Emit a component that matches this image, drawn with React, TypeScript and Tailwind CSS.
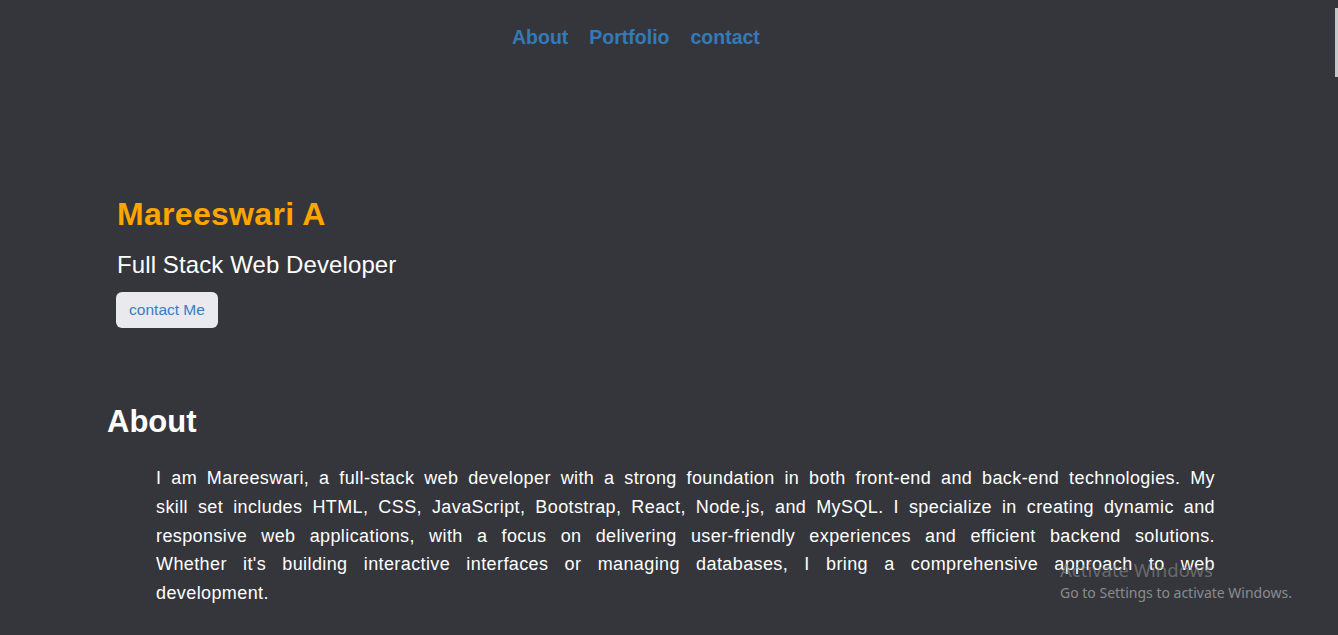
import React from "react";

const lines = [
  "I am Mareeswari, a full-stack web developer with a strong foundation in both front-end and back-end technologies. My",
  "skill set includes HTML, CSS, JavaScript, Bootstrap, React, Node.js, and MySQL. I specialize in creating dynamic and",
  "responsive web applications, with a focus on delivering user-friendly experiences and efficient backend solutions.",
  "Whether it's building interactive interfaces or managing databases, I bring a comprehensive approach to web",
];

export default function App() {
  return (
    <div
      className="relative min-h-screen w-full bg-[#35363b] overflow-hidden"
      style={{ fontFamily: '"Liberation Sans", Arial, sans-serif' }}
    >
      <nav className="flex gap-[21px] pl-[512px] pt-[25px]">
        <a className="text-[19.5px] leading-[24px] font-bold text-[#337ab7]">About</a>
        <a className="text-[19.5px] leading-[24px] font-bold text-[#337ab7]">Portfolio</a>
        <a className="text-[19.5px] leading-[24px] font-bold text-[#337ab7]">contact</a>
      </nav>

      <section className="pl-[117px] pt-[146px] flex flex-col items-start">
        <h1 className="text-[32px] leading-[38px] font-bold tracking-[0.3px] text-[#ffa500]">Mareeswari A</h1>
        <h3 className="mt-[18px] text-[24px] leading-[28px] tracking-[0.1px] text-white">Full Stack Web Developer</h3>
        <button className="mt-[13px] ml-[-1px] h-[36px] w-[102px] rounded-[6px] bg-[#e9e9ee] text-[15.5px] text-[#3a7dc2]">
          contact Me
        </button>
      </section>

      <section className="pl-[107px] pt-[76px]">
        <h2 className="text-[31px] leading-[36px] font-bold text-white">About</h2>
        <div className="mt-[24px] ml-[49px] w-[1059px] text-[18px] leading-[28.8px] tracking-[0.4px] text-white">
          {lines.map((l, i) => (
            <p key={i} className="text-justify [text-align-last:justify]">
              {l}
            </p>
          ))}
          <p>development.</p>
        </div>
      </section>

      <div
        className="pointer-events-none absolute left-[1060px] top-[557px] text-[#8a8b8f]"
        style={{ fontFamily: '"Noto Sans", "Open Sans", sans-serif' }}
      >
        <div className="text-[18.5px] leading-[26px] opacity-60">Activate Windows</div>
        <div className="text-[14px] leading-[20px]">Go to Settings to activate Windows.</div>
      </div>

      <div className="absolute right-0 top-[8px] h-[69px] w-[3px] bg-[#c6c6c6]" />
    </div>
  );
}
